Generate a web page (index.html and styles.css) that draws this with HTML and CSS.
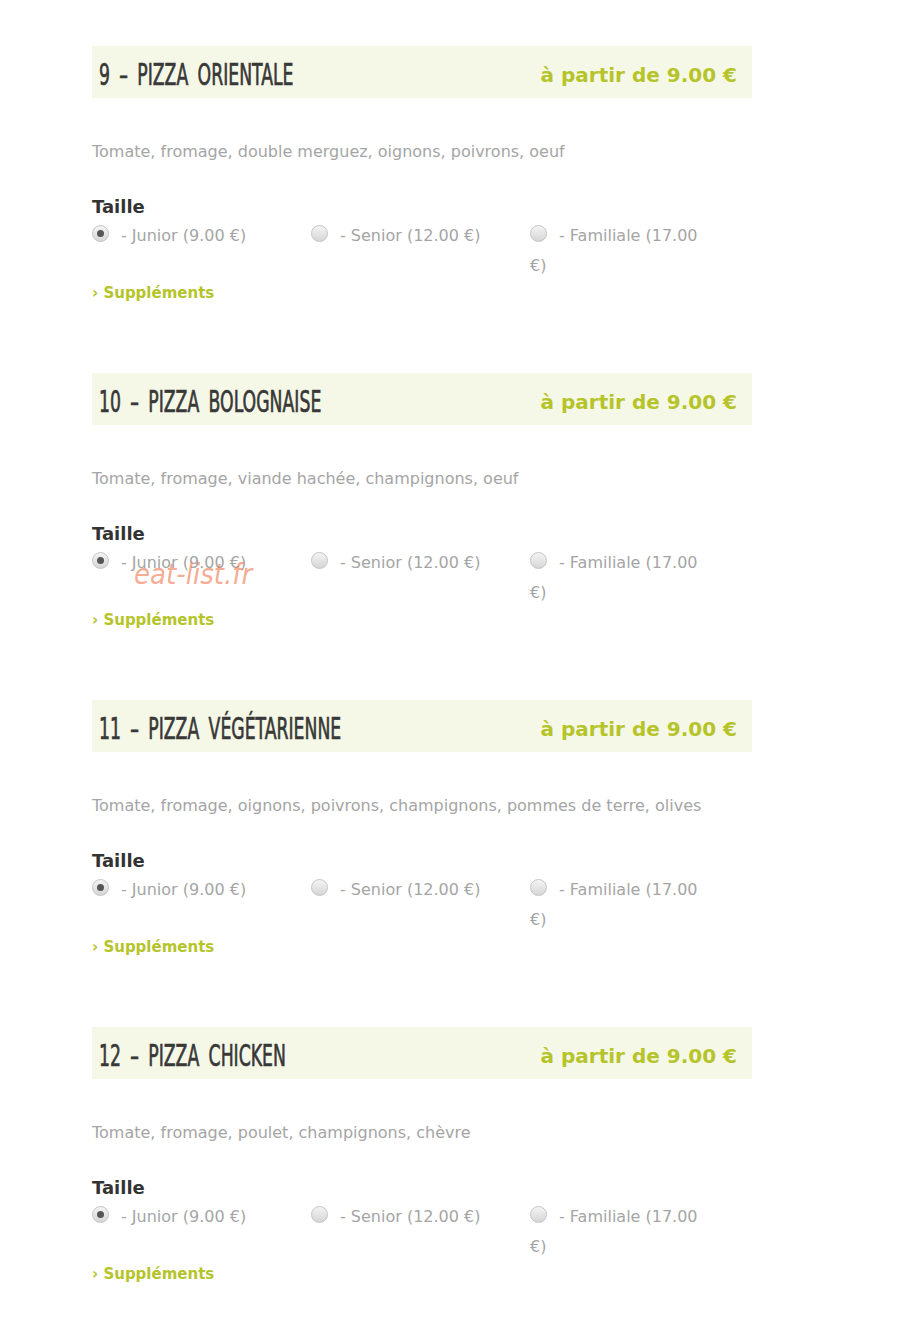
FILE: index.html
```html
<!DOCTYPE html>
<html lang="fr">
<head>
  <meta charset="UTF-8">
  <title>Pizzas</title>
  <link rel="stylesheet" href="styles.css">
</head>
<body>

  <div class="carte">

    <div class="pizza">
      <div class="pizza-titre">
        <h2>9 – PIZZA ORIENTALE</h2>
        <span class="prix">à partir de 9.00 €</span>
      </div>
      <p class="ingredients">Tomate, fromage, double merguez, oignons, poivrons, oeuf</p>
      <h3>Taille</h3>
      <div class="tailles">
        <label><span class="radio on"></span>- Junior (9.00 €)</label>
        <label><span class="radio"></span>- Senior (12.00 €)</label>
        <label><span class="radio"></span>- Familiale (17.00 €)</label>
      </div>
      <a class="supplements" href="#">› Suppléments</a>
    </div>

    <div class="pizza">
      <div class="pizza-titre">
        <h2>10 – PIZZA BOLOGNAISE</h2>
        <span class="prix">à partir de 9.00 €</span>
      </div>
      <p class="ingredients">Tomate, fromage, viande hachée, champignons, oeuf</p>
      <h3>Taille</h3>
      <div class="tailles">
        <label><span class="radio on"></span>- Junior (9.00 €)</label>
        <label><span class="radio"></span>- Senior (12.00 €)</label>
        <label><span class="radio"></span>- Familiale (17.00 €)</label>
      </div>
      <a class="supplements" href="#">› Suppléments</a>
      <span class="filigrane">eat-list.fr</span>
    </div>

    <div class="pizza">
      <div class="pizza-titre">
        <h2>11 – PIZZA VÉGÉTARIENNE</h2>
        <span class="prix">à partir de 9.00 €</span>
      </div>
      <p class="ingredients">Tomate, fromage, oignons, poivrons, champignons, pommes de terre, olives</p>
      <h3>Taille</h3>
      <div class="tailles">
        <label><span class="radio on"></span>- Junior (9.00 €)</label>
        <label><span class="radio"></span>- Senior (12.00 €)</label>
        <label><span class="radio"></span>- Familiale (17.00 €)</label>
      </div>
      <a class="supplements" href="#">› Suppléments</a>
    </div>

    <div class="pizza">
      <div class="pizza-titre">
        <h2>12 – PIZZA CHICKEN</h2>
        <span class="prix">à partir de 9.00 €</span>
      </div>
      <p class="ingredients">Tomate, fromage, poulet, champignons, chèvre</p>
      <h3>Taille</h3>
      <div class="tailles">
        <label><span class="radio on"></span>- Junior (9.00 €)</label>
        <label><span class="radio"></span>- Senior (12.00 €)</label>
        <label><span class="radio"></span>- Familiale (17.00 €)</label>
      </div>
      <a class="supplements" href="#">› Suppléments</a>
    </div>

  </div>

</body>
</html>
```

FILE: styles.css
```css
* {
  box-sizing: border-box;
}

body {
  margin: 0;
  background: #fff;
  font-family: 'DejaVu Sans', sans-serif;
  color: #333;
}

.carte {
  width: 660px;
  margin-left: 92px;
  padding-top: 46px;
}

.pizza {
  position: relative;
  margin-bottom: 68px;
}

.pizza-titre {
  display: flex;
  justify-content: space-between;
  align-items: center;
  height: 52px;
  padding: 6px 15px 0 7px;
  background: #f6f8e7;
}

/* police étroite : on resserre la DejaVu */
.pizza-titre h2 {
  margin: 0;
  font-family: 'DejaVu Sans Condensed', sans-serif;
  font-weight: normal;
  font-size: 30px;
  line-height: 40px;
  color: #383838;
  -webkit-text-stroke: 0.7px #383838;
  word-spacing: 6px;
  transform: scaleX(0.64);
  transform-origin: left center;
  white-space: nowrap;
}

.prix {
  font-size: 20px;
  font-weight: bold;
  color: #b5c42a;
}

.ingredients {
  margin: 42px 0 0;
  line-height: 24px;
  font-size: 16px;
  color: #a5a5a5;
}

.pizza h3 {
  margin: 31px 0 0;
  line-height: 24px;
  font-size: 18px;
  color: #333;
}

.tailles {
  display: grid;
  grid-template-columns: repeat(3, 180px);
  column-gap: 39px;
  margin-top: 2px;
}

.tailles label {
  line-height: 30px;
  font-size: 16px;
  color: #a5a5a5;
}

.radio {
  display: inline-block;
  width: 17px;
  height: 17px;
  margin-right: 12px;
  vertical-align: -1px;
  border: 1px solid #c4c4c4;
  border-radius: 50%;
  background: linear-gradient(#f4f4f4, #d6d6d6);
  position: relative;
}

.radio.on::after {
  content: "";
  position: absolute;
  top: 4px;
  left: 4px;
  width: 7px;
  height: 7px;
  border-radius: 50%;
  background: #555;
}

.supplements {
  display: block;
  line-height: 24px;
  font-size: 15px;
  font-weight: bold;
  color: #b5c42a;
  text-decoration: none;
}

.filigrane {
  position: absolute;
  left: 42px;
  top: 184px;
  font-size: 29px;
  font-style: italic;
  color: rgba(238, 125, 85, 0.65);
  font-family: 'DejaVu Sans Condensed', sans-serif;
}
```
